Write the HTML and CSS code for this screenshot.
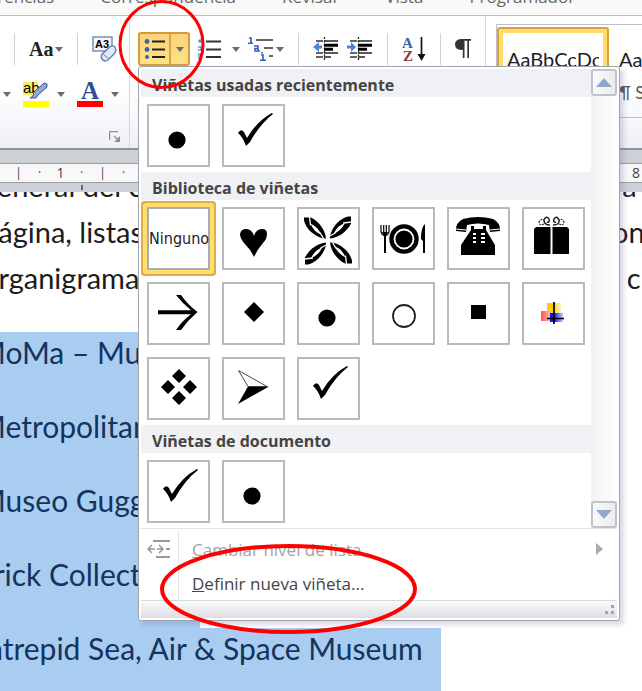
FILE: index.html
```html
<!DOCTYPE html>
<html lang="es">
<head>
<meta charset="utf-8">
<title>Viñetas</title>
<link rel="stylesheet" href="styles.css">
</head>
<body>
<svg class="defs" width="0" height="0" aria-hidden="true">
  <defs>
    <symbol id="check" viewBox="2 2 59 59"><path d="M16 29Q19 24 22 28L25 34Q35 17 50 9L51 10Q38 20 28 38L24 42Q21 33 16 29Z"/></symbol>
    <symbol id="dot" viewBox="2 2 59 59"><circle cx="30" cy="36" r="8.6"/></symbol>
    <symbol id="caret" viewBox="0 0 8 5"><path d="M0 0H8L4 5Z" fill="#6b6b6b"/></symbol>
  </defs>
</svg>

<nav class="tabs">
  <a href="#">Referencias</a>
  <a href="#">Correspondencia</a>
  <a href="#">Revisar</a>
  <a href="#">Vista</a>
  <a href="#">Programador</a>
</nav>

<header class="ribbon">
  <section class="group font-group">
    <div class="tools">
      <i class="sep"></i>
      <button class="tool case" aria-label="Cambiar mayúsculas y minúsculas">Aa<svg class="caret"><use href="#caret"/></svg></button>
      <i class="sep"></i>
      <button class="tool" aria-label="Borrar formato">
        <svg width="26" height="27" viewBox="0 0 26 27">
          <rect x="1" y="1" width="19" height="14" fill="#f4f7fd" stroke="#6f86b4" stroke-width="1.4"/>
          <text x="3" y="12" class="icon-sans">A3</text>
          <path d="M10 18L19 10Q21 9 23 11L24 14Q24 16 22 18L16 24Q13 26 11 24Q8 21 10 18Z" fill="#dfe8f8" stroke="#5f78aa" stroke-width="1.3"/>
          <path d="M11 18L17 23" stroke="#8ea5cf" stroke-width="1.2"/>
        </svg>
      </button>
    </div>
    <div class="tools second">
      <button class="tool" aria-label="Efectos de texto"><svg class="caret"><use href="#caret"/></svg></button>
      <button class="tool" aria-label="Resaltado">
        <svg width="26" height="27" viewBox="0 0 26 27">
          <rect x="0" y="1" width="15" height="13" fill="#f4ee62"/>
          <text x="0" y="12" class="icon-ab">ab</text>
          <path d="M24 3L21 2L11 11L10 15L7 17L13 17L15 14L24 6Z" fill="#8fa9d8" stroke="#3c5486" stroke-width="1"/>
          <rect x="0" y="20" width="26" height="6" fill="#ff0"/>
        </svg>
        <svg class="caret"><use href="#caret"/></svg>
      </button>
      <button class="tool" aria-label="Color de fuente">
        <svg width="26" height="27" viewBox="0 0 26 27">
          <text x="4" y="18" class="icon-a">A</text>
          <rect x="0" y="20" width="26" height="6" fill="#f00"/>
        </svg>
        <svg class="caret"><use href="#caret"/></svg>
      </button>
    </div>
    <button class="tool launcher" aria-label="Fuente">
      <svg width="12" height="12" viewBox="0 0 12 12" fill="none" stroke="#8b8f96"><path d="M.7 9V.7H9" stroke-width="1.2"/><path d="M5 5L9 9" stroke-width="1.2"/><path d="M11 5V11H5Z" fill="#8b8f96" stroke="none"/></svg>
    </button>
  </section>

  <section class="group para-group">
    <div class="tools">
      <button class="bullets" aria-label="Viñetas">
        <span class="bullets-icon">
          <svg width="22" height="20" viewBox="0 0 22 20"><g fill="#3565b5"><circle cx="3" cy="2.5" r="2.4"/><circle cx="3" cy="10.500" r="2.400"/><circle cx="3" cy="18" r="2"/></g><path d="M8 2.500H21M8 10.500H21M8 18H21" stroke="#222" stroke-width="1.8"/></svg>
        </span>
        <span class="bullets-arrow"><svg class="caret"><use href="#caret"/></svg></span>
      </button>
      <button class="tool wide" aria-label="Numeración">
        <svg width="24" height="20" viewBox="0 0 24 20"><path d="M0 2H3M2 0V4M0 8H3V11H0M0 15H3V19H0M0 17H3" stroke="#3565b5" fill="none"/><path d="M8 2.500H23M8 10.500H23M8 18H23" stroke="#333" stroke-width="1.800"/></svg>
        <svg class="caret"><use href="#caret"/></svg>
      </button>
      <button class="tool" aria-label="Lista multinivel">
        <svg width="26" height="26" viewBox="0 0 26 26"><g stroke="#2f62c0" stroke-width="1.600" fill="none"><path d="M1 2H3V7M0 7.200H5"/><path d="M6 10H10V15H7V12.500H10M10 15H12"/><path d="M13 19H15V24M12 24.300H18M14 16V17.500"/></g><path d="M8 4H25M16 12H25M21 20H25" stroke="#333" stroke-width="1.600"/></svg><svg class="caret"><use href="#caret"/></svg>
      </button>
      <i class="sep"></i>
      <button class="tool" aria-label="Disminuir sangría">
        <svg width="26" height="24" viewBox="0 0 26 24"><path d="M3 4H10M3 16H10M3 20H10" stroke="#333" stroke-width="1.400"/><path d="M11.500 0V24" stroke="#222" stroke-width="1.300" stroke-dasharray="2 1.500"/><path d="M11 4H25M11 16H25M11 20H18" stroke="#222" stroke-width="1.500"/><path d="M11 8.300H25M11 12.300H20" stroke="#000" stroke-width="3"/><path d="M0 10L6 5V8.500H9V11.500H6V15Z" fill="#4b83dc"/></svg>
      </button>
      <button class="tool" aria-label="Aumentar sangría">
        <svg width="26" height="24" viewBox="0 0 26 24"><path d="M3 4H10M3 16H10M3 20H10" stroke="#333" stroke-width="1.400"/><path d="M11.500 0V24" stroke="#222" stroke-width="1.300" stroke-dasharray="2 1.500"/><path d="M11 4H25M11 16H25M11 20H18" stroke="#222" stroke-width="1.500"/><path d="M11 8.300H25M11 12.300H20" stroke="#000" stroke-width="3"/><path d="M9 10L4 5V8.500H0V11.500H4V15Z" fill="#4b83dc"/></svg>
      </button>
      <i class="sep"></i>
      <button class="tool" aria-label="Ordenar">
        <svg width="24" height="26" viewBox="0 0 24 26"><text x="0" y="12" class="icon-sort blue">A</text><text x="1" y="25" class="icon-sort red">Z</text><path d="M19.500 1V19" stroke="#111" stroke-width="1.700"/><path d="M15.500 18H23.500L19.500 25Z" fill="#111"/></svg>
      </button>
      <i class="sep"></i>
      <button class="tool" aria-label="Mostrar todo">
        <svg width="16" height="20" viewBox="0 0 16 20"><path d="M16 0V1.800H14V19H12.300V1.800H9.500V19H7.800V11Q0 11 0 5.500Q0 0 7 0Z" fill="#333"/></svg>
      </button>
    </div>
  </section>

  <section class="group styles-group">
    <div class="gallery">
      <button class="style selected"><span>AaBbCcDc</span></button>
      <button class="style"><span>AaBbCcDc</span><small>¶ Sin espa...</small></button>
    </div>
  </section>
</header>

<div class="ruler">
  <div class="marks"><span>|</span><span>·</span><span class="num">1</span><span>·</span><span>|</span><span>·</span><span class="num end">8</span></div>
  <div class="tab-stop"></div>
</div>

<main class="document">
  <div class="line"><span>general del c</span><span class="tail">ra</span></div>
  <div class="line"><span>página, listas</span><span class="tail">on</span></div>
  <div class="line"><span>organigramas</span><span class="tail">&nbsp;&nbsp;c</span></div>
  <ul class="museums">
    <li>MoMa – Museo</li>
    <li>Metropolitan</li>
    <li>Museo Guggenheim</li>
    <li>Frick Collection</li>
    <li>Intrepid Sea, Air &amp; Space Museum</li>
  </ul>
</main>

<div class="menu">
  <div class="library">
    <div class="sections">
      <h2>Viñetas usadas recientemente</h2>
      <div class="tiles">
        <button class="tile" aria-label="Punto"><svg><use href="#dot"/></svg></button>
        <button class="tile" aria-label="Marca"><svg><use href="#check"/></svg></button>
      </div>
      <h2>Biblioteca de viñetas</h2>
      <div class="tiles">
        <button class="tile none">Ninguno</button>
        <button class="tile" aria-label="Corazón"><svg viewBox="2 2 59 59"><path d="M32 50Q29 43 22 36Q18 31 18 27Q19 22 24 22Q30 22 32 29Q34 22 40 22Q45 22 45 27Q45 32 41 36Q35 43 32 50Z"/></svg></button>
        <button class="tile" aria-label="Pétalos"><svg viewBox="2 2 59 59"><defs><g id="petal"><path d="M-24 -23H-17C-9 -19 -3 -11 -2 -2H-5C-15 -5 -22 -12 -24 -20Z"/><path d="M-17.500 -17C-12 -14 -9 -11 -7 -6C-12 -8 -15 -11 -17.500 -17Z" fill="#fff"/><path d="M-18.500 -24L-17.500 -15M-8 -8L-4 -1" stroke="#fff" stroke-width="1.300"/></g></defs><g transform="translate(31 33.500)"><use href="#petal"/><use href="#petal" transform="rotate(90)"/><use href="#petal" transform="rotate(180)"/><use href="#petal" transform="rotate(270)"/></g></svg></button>
        <button class="tile" aria-label="Plato"><svg viewBox="2 2 59 59"><circle cx="32" cy="32" r="14.700"/><circle cx="32" cy="32" r="9.500" fill="none" stroke="#fff" stroke-width="1.800"/><path d="M9 18V25Q10 28 12 28.500M14 28.500Q16 28 17 25V18M11.700 18V25M14.300 18V25" fill="none" stroke="#000" stroke-width="1.200"/><path d="M10 25H16L14 29V46H12V29Z"/><path d="M53 17Q49 20 49 32L51 34V46H53Z"/></svg></button>
        <button class="tile" aria-label="Teléfono"><svg viewBox="2 2 59 59"><path d="M9 24Q8 16 16 12Q31 8 46 12Q54 16 53 24L43 25L42 18Q31 15 20 18L19 25Z"/><path d="M24 19H27V22H36V19H39V23L48 38V48H14V38L24 23Z"/><path d="M9 22L19 23M43 23L53 22" stroke="#fff" stroke-width="1"/><path d="M26 27H29M34 27H38M26 31H29M34 31H38M26 35H29M34 35H38" stroke="#fff" stroke-width="2.200"/></svg></button>
        <button class="tile" aria-label="Regalo"><svg viewBox="2 2 59 59"><path d="M12 22L14 20H28.500V47H12ZM30.500 20H45L47 22V47H30.500Z"/><g fill="none" stroke="#222" stroke-width="1.200"><path d="M28 18Q22 18 22 13Q24 8 27 12Q28 16 25 15M31 18Q38 18 37 13Q35 8 32 12Q31 16 34 15" stroke-width="1.500"/><path d="M22 17Q17 19 17 15Q19 11 22 13M37 17Q42 19 42 15Q40 11 37 13" stroke-dasharray="2 1"/></g></svg></button>
        <button class="tile" aria-label="Flecha"><svg viewBox="2 2 59 59"><path d="M11 28.300H44Q36 22 29 13H34Q41 23 50.500 30Q41 38 34 48H29Q36 38 44 32.300H11Z"/></svg></button>
        <button class="tile" aria-label="Rombo"><svg viewBox="2 2 59 59"><path d="M32 20L42 30L32 40L22 30Z"/></svg></button>
        <button class="tile" aria-label="Punto"><svg><use href="#dot"/></svg></button>
        <button class="tile" aria-label="Círculo"><svg viewBox="2 2 59 59"><circle cx="32" cy="34" r="11" fill="none" stroke="#222" stroke-width="1.800"/></svg></button>
        <button class="tile" aria-label="Cuadrado"><svg viewBox="2 2 59 59"><path d="M24 23H39V37H24Z"/></svg></button>
        <button class="tile" aria-label="Cruz de color"><svg viewBox="2 2 59 59"><defs><linearGradient id="gy"><stop offset=".4" stop-color="#fc0"/><stop offset="1" stop-color="#fff3c0"/></linearGradient><linearGradient id="gr"><stop offset="0" stop-color="#f55"/><stop offset="1" stop-color="#fbb"/></linearGradient><linearGradient id="gb"><stop offset=".3" stop-color="#11e"/><stop offset="1" stop-color="#ccf"/></linearGradient></defs><path d="M25 21H39V31H25Z" fill="url(#gy)"/><path d="M19 29H29V39H19Z" fill="url(#gr)"/><path d="M28 31H41V40H28Z" fill="url(#gb)"/><path d="M32 20V42M25 36.500H42" stroke="#000" stroke-width="1.700"/></svg></button>
        <button class="tile" aria-label="Cuatro rombos"><svg viewBox="2 2 59 59"><path d="M32 12L39 19L32 26L25 19ZM32 34L39 41L32 48L25 41ZM21 23L28 30L21 37L14 30ZM43 23L50 30L43 37L36 30Z"/></svg></button>
        <button class="tile" aria-label="Punta de flecha"><svg viewBox="2 2 59 59"><path d="M16 47L26 29.500H47Z"/><path d="M16.500 13.500L45 29.500H26Z" fill="none" stroke="#333" stroke-width=".9"/></svg></button>
        <button class="tile" aria-label="Marca"><svg><use href="#check"/></svg></button>
      </div>
      <h2>Viñetas de documento</h2>
      <div class="tiles">
        <button class="tile" aria-label="Marca"><svg><use href="#check"/></svg></button>
        <button class="tile" aria-label="Punto"><svg><use href="#dot"/></svg></button>
      </div>
    </div>
    <div class="scroll">
      <button aria-label="Subir"><svg width="16" height="9" viewBox="0 0 16 9"><path d="M0 9L8 0L16 9Z"/></svg></button>
      <button aria-label="Bajar"><svg width="16" height="9" viewBox="0 0 16 9"><path d="M0 0L8 9L16 0Z"/></svg></button>
    </div>
  </div>
  <div class="commands">
    <button class="command disabled" disabled>
      <span class="command-icon"><svg width="24" height="18" viewBox="0 0 24 18" fill="none" stroke="#999" stroke-width="1.800"><path d="M6 1H23M9 17H23M19 9H23"/><path d="M1 9H8M10 9H16M5 5L1 9L5 13M12 5L16 9L12 13" stroke-width="1.500"/></svg></span>
      <span class="label"><u>C</u>ambiar nivel de lista</span>
      <svg width="7" height="12" viewBox="0 0 7 12"><path d="M0 0L7 6L0 12Z" fill="#aaa"/></svg>
    </button>
    <button class="command">
      <span class="command-icon"></span>
      <span class="label"><u>D</u>efinir nueva viñeta...</span>
    </button>
  </div>
  <div class="grip"><svg width="12" height="12" viewBox="0 0 12 12" fill="#9aa6b8"><rect x="8" y="1" width="3" height="3"/><rect x="2" y="7" width="3" height="3"/><rect x="8" y="7" width="3" height="3"/></svg></div>
</div>

<svg class="annotations" width="420" height="640" viewBox="0 0 420 640" fill="none" stroke="#f00" aria-hidden="true">
  <ellipse cx="161.500" cy="44.500" rx="41.500" ry="43" stroke-width="3"/>
  <ellipse cx="288.500" cy="589" rx="126.500" ry="43" stroke-width="4"/>
</svg>
</body>
</html>
```
FILE: styles.css
```css
* { box-sizing: border-box; }

body {
  position: relative;
  margin: 0;
  min-height: 100vh;
  overflow: hidden;
  background: #fff;
  color: #222;
  font-family: "Open Sans", "Noto Sans", sans-serif;
}

button {
  margin: 0;
  padding: 0;
  border: 0;
  background: none;
  color: inherit;
  font: inherit;
}

svg { display: block; flex: none; }
.defs { position: absolute; }

/* Ribbon tabs */
.tabs {
  display: flex;
  gap: 46px;
  height: 15px;
  overflow: hidden;
  margin-left: -38px;
  background: #f9f9f8;
}
.tabs a {
  margin-top: -15px;
  color: #666;
  font-size: 17px;
  line-height: 24px;
  text-decoration: none;
}

/* Ribbon */
.ribbon {
  display: flex;
  height: 135px;
  overflow: hidden;
  border-top: 1px solid #b9bcc1;
  border-bottom: 2px solid #8d9197;
  background: linear-gradient(#fff 0%, #fff 55%, #eef0f4 100%);
}
.group { flex: none; border-right: 1px solid #d3d7de; }
.font-group { width: 130px; padding: 16px 8px 0 2px; }
.para-group { width: 356px; padding: 16px 0 0 8px; }
.styles-group { flex: 1; min-width: 0; padding: 8px 0 0 10px; border: 0; }

.tools { display: flex; align-items: center; gap: 14px; height: 34px; }
.font-group .tools { padding-left: 12px; }
.font-group .second { gap: 12px; height: 28px; margin-top: 14px; padding-left: 1px; }
.sep { flex: none; width: 1px; height: 32px; background: #ccd1da; }
.tool { display: flex; align-items: center; gap: 8px; flex: none; }
.caret { width: 8px; height: 5px; }
.case { gap: 2px; font-family: "Liberation Serif", serif; font-size: 20px; font-weight: 700; }
.launcher { margin: 23px 0 0 auto; }

.icon-sans { font: 700 11px "Liberation Sans", sans-serif; }
.icon-ab { font: 15px "Liberation Sans", sans-serif; }
.icon-a { font: 700 25px "Liberation Serif", serif; fill: #2d4f93; }
.icon-sort { font: 700 15px "Liberation Serif", serif; }
.blue { fill: #3763ad; }
.red { fill: #9c2f35; }

.para-group .tools { gap: 8px; }
.para-group .tool { gap: 2px; }
.para-group .wide { gap: 10px; }
.para-group .sep { margin: 0 6px; }
.bullets {
  display: flex;
  flex: none;
  height: 34px;
  border: 2px solid #d39a3f;
  border-radius: 3px;
  background: linear-gradient(#fbd37a, #ffe183);
}
.bullets-icon, .bullets-arrow { display: flex; align-items: center; justify-content: center; height: 30px; }
.bullets-icon { width: 31px; border-right: 2px solid #d9a44a; }
.bullets-arrow { width: 17px; }

.gallery {
  display: flex;
  height: 94px;
  overflow: hidden;
  border: 1px solid #bcc1ca;
  border-right: 0;
}
.style {
  display: flex;
  flex-direction: column;
  flex: none;
  gap: 10px;
  width: 112px;
  padding: 22px 10px 0;
  overflow: hidden;
  text-align: left;
  font-family: Lato, sans-serif;
  font-size: 20px;
  line-height: 24px;
}
.style span { flex: none; overflow: hidden; }
.style small { font-size: 17px; white-space: nowrap; color: #555; }
.selected {
  margin-top: 2px;
  padding: 18px 4px 0;
  border: 2px solid #d9a23b;
  border-radius: 3px;
  box-shadow: inset 0 0 0 4px #ffdc6b;
}
.selected span { margin: 0 4px; }

/* Ruler */
.ruler {
  padding: 13px 0 2px;
  background: #cdd0d6;
}
.marks {
  display: flex;
  height: 20px;
  padding-left: 8px;
  border: solid #989ca3;
  border-width: 1px 0;
  background: #f8f8f9;
  color: #444;
  font-size: 12px;
  line-height: 17px;
  text-align: center;
}
.marks span { flex: none; width: 21px; }
.marks .num { font-size: 14px; }
.marks .end { width: 12px; margin-left: auto; }
.tab-stop {
  width: 2px;
  height: 5px;
  margin: 2px 0 0 81px;
  background: #666;
}

/* Document */
.document {
  overflow: hidden;
  color: #1c1c1c;
  font-family: Lato, sans-serif;
  font-size: 29px;
  font-variant-ligatures: none;
}
.line {
  display: flex;
  justify-content: space-between;
  height: 46px;
  margin-left: -18px;
  line-height: 44px;
  white-space: nowrap;
}
.line:first-child { margin-top: -28px; }
.tail { width: 30px; }
.museums {
  margin: 30px 0 0;
  padding: 0;
  list-style: none;
  color: #14335e;
  font-size: 30px;
}
.museums li {
  width: fit-content;
  height: 74px;
  padding: 0 18px 0 0;
  background: #a9cdf1;
  line-height: 40px;
  text-indent: -22px;
  white-space: nowrap;
}

/* Drop-down menu */
.menu {
  position: absolute;
  top: 66px;
  left: 138px;
  width: 482px;
  padding: 2px;
  border: 1px solid #9fa4ac;
  border-radius: 3px;
  background: #fff;
  box-shadow: 4px 4px 4px rgba(120, 105, 160, .25);
}
.library { display: flex; border-bottom: 1px solid #dfe3e9; }
.sections { flex: 1; }
.sections h2 {
  height: 28px;
  margin: 0;
  padding-left: 11px;
  background: #f0f1f5;
  color: #444;
  font-size: 16px;
  font-weight: 700;
  line-height: 32px;
}
.tiles {
  display: grid;
  grid-template-columns: repeat(6, 63px);
  gap: 12px;
  padding: 7px 6px 5px;
}
.tile {
  display: block;
  width: 63px;
  height: 63px;
  border: 2px solid #bababa;
  background: #fff;
}
.tile svg { width: 59px; height: 59px; }
.none {
  border-color: #a9acb5;
  border-radius: 1px;
  box-shadow: 0 0 0 4px #ffde6c, 0 0 0 6px #dfae4b;
  font-family: "DejaVu Sans Condensed", "DejaVu Sans", sans-serif;
  font-size: 16px;
}
.scroll {
  display: flex;
  flex-direction: column;
  justify-content: space-between;
  width: 26px;
  background: linear-gradient(90deg, #f1f1f1, #fff);
}
.scroll button {
  display: grid;
  place-items: center;
  height: 27px;
  border: 2px solid #bfc3ca;
  border-radius: 3px;
  background: linear-gradient(90deg, #fafafa, #ececee);
}
.scroll path { fill: #94a5cd; }

.commands { padding: 3px 0 0; }
.command {
  display: flex;
  align-items: center;
  width: 100%;
  height: 34px;
  padding-right: 14px;
  color: #444;
  font-size: 17px;
  text-align: left;
}
.command-icon {
  display: flex;
  align-items: center;
  width: 38px;
  height: 34px;
  padding-left: 6px;
  border-right: 1px solid #dfe3e9;
}
.label { flex: 1; padding-left: 13px; }
.disabled { color: #a3a3a3; }
.grip {
  display: flex;
  justify-content: flex-end;
  align-items: center;
  height: 18px;
  padding-right: 2px;
  border-top: 1px solid #d5dbe3;
  background: linear-gradient(#fafafb, #dcdee3);
}

.annotations { position: absolute; top: 0; left: 0; pointer-events: none; }
```
